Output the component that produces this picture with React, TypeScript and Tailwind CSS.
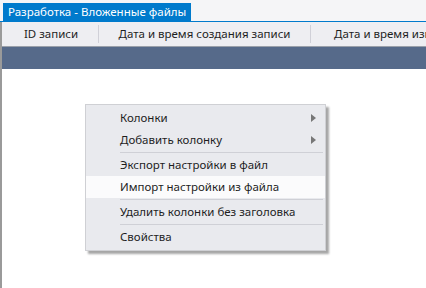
const items = [
  { label: "Колонки", arrow: true },
  { label: "Добавить колонку", arrow: true, sep: true },
  { label: "Экспорт настройки в файл" },
  { label: "Импорт настройки из файла", active: true, sep: true },
  { label: "Удалить колонки без заголовка", sep: true },
  { label: "Свойства" },
];

const App = () => {
  return (
    <div
      className="w-[426px] h-[288px] overflow-hidden bg-white relative text-[11.5px] text-[#1e1e1e]"
      style={{ fontFamily: '"Noto Sans", "Open Sans", sans-serif' }}
    >
      {/* tab strip */}
      <div className="h-[22px] bg-[#f5f5f7] border-b border-[#007acc] flex items-end pl-[3px]">
        <div className="h-[18px] bg-[#007acc] text-white px-[5px] flex items-center text-[11.5px] leading-none">
          Разработка - Вложенные файлы
        </div>
      </div>

      <div className="border-l-2 border-[#9a9a9a] h-full">
        {/* header row */}
        <div className="h-[25px] bg-[#eeeef2] flex items-center border-b border-[#9aa0aa] whitespace-nowrap overflow-hidden">
          <div className="w-[97px] shrink-0 h-[18px] flex items-center justify-center border-r border-[#d0d0d8] pl-[2px]">
            ID записи
          </div>
          <div className="w-[212px] shrink-0 h-[18px] flex items-center justify-center border-r border-[#d0d0d8]">
            Дата и время создания записи
          </div>
          <div className="shrink-0 pl-[23px]">Дата и время изменения записи</div>
        </div>
        {/* dark band */}
        <div className="h-[22px] bg-[#566a8a]" />
      </div>

      {/* context menu */}
      <div className="absolute left-[85px] top-[104px] w-[241px] bg-[#e9eaee] border border-[#cfd0d4] shadow-[3px_3px_2px_rgba(0,0,0,0.35)] py-[2px]">
        {items.map((it) => (
          <div key={it.label}>
            <div
              className={
                it.active
                  ? "h-[22px] flex items-center pl-[34px] pr-[8px] bg-[#fbfbfc]"
                  : "h-[22px] flex items-center pl-[34px] pr-[8px]"
              }
            >
              <span className="flex-1">{it.label}</span>
              {it.arrow && (
                <svg width="5" height="8" viewBox="0 0 5 8" className="mr-[1px]">
                  <path d="M0 0 L5 4 L0 8 Z" fill="#777" />
                </svg>
              )}
            </div>
            {it.sep && <div className="ml-[34px] mr-[2px] h-px bg-[#cfd0d6] my-[1px]" />}
          </div>
        ))}
      </div>
    </div>
  );
};

export default App;
